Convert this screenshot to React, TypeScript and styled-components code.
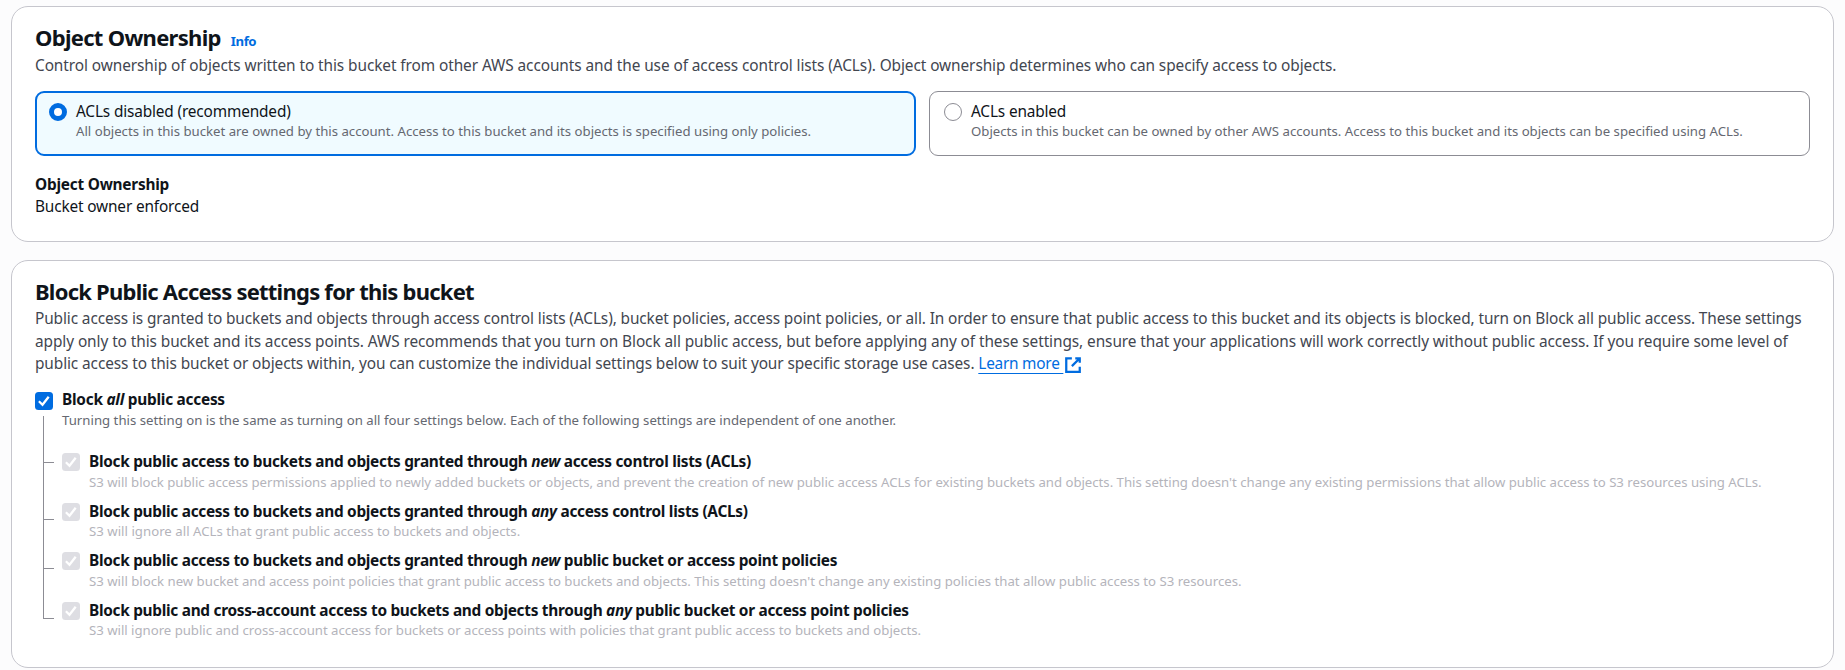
import React from 'react';
import styled, { createGlobalStyle, css } from 'styled-components';

const color = {
  page: '#fcfcfd',
  card: '#ffffff',
  divider: '#c6c6cd',
  heading: '#0f141a',
  body: '#424650',
  label: '#0f141a',
  hint: '#656871',
  disabled: '#b4b4bb',
  disabledFill: '#dedee3',
  control: '#8c8c94',
  accent: '#006ce0',
  selected: '#f0fbff',
};

const GlobalStyle = createGlobalStyle`
  *, *::before, *::after { box-sizing: border-box; }
  body {
    margin: 0;
    background: ${color.page};
    color: ${color.label};
    font-family: 'Noto Sans', 'Open Sans', sans-serif;
    font-size: 15.4px;
    line-height: 22px;
    letter-spacing: -0.1px;
  }
`;

const Page = styled.main`
  display: flex;
  flex-direction: column;
  gap: 18px;
  width: 100%;
  padding: 6px 11px 2px;
`;

const Card = styled.section<{ $height: number }>`
  height: ${(p) => p.$height}px;
  padding: 17px 23px 0;
  border: 1px solid ${color.divider};
  border-radius: 17px;
  background: ${color.card};
`;

const CardHeading = styled.div`
  display: flex;
  align-items: baseline;
  gap: 10px;
  height: 26px;
`;

const Title = styled.h2<{ $tracking: number }>`
  margin: 0;
  color: ${color.heading};
  font-size: 22px;
  font-weight: 700;
  line-height: 26px;
  letter-spacing: ${(p) => p.$tracking}px;
  white-space: nowrap;
`;

const InfoLink = styled.a`
  color: ${color.accent};
  font-size: 13.2px;
  font-weight: 700;
  letter-spacing: -0.4px;
`;

const Summary = styled.p`
  margin: 5px 0 0;
  color: ${color.body};
  letter-spacing: -0.082px;
`;

const Intro = styled.p`
  margin: 4.4px 0 0;
  color: ${color.body};
  line-height: 22.4px;
`;

const IntroLine = styled.span<{ $tracking: number }>`
  display: block;
  letter-spacing: ${(p) => p.$tracking}px;
  white-space: nowrap;
`;

const ExternalLink = styled.a`
  color: ${color.accent};
  letter-spacing: -0.24px;
  white-space: pre;
  text-decoration: underline;
  text-decoration-thickness: 1px;
  text-underline-offset: 4px;
`;

const ExternalIcon = styled.svg`
  width: 18px;
  height: 18px;
  margin-left: 1px;
  vertical-align: -5px;
  fill: none;
  stroke: ${color.accent};
  stroke-width: 2;
`;

const Tiles = styled.div`
  display: grid;
  grid-template-columns: 1fr 1fr;
  gap: 13px;
  margin-top: 14px;
`;

const Tile = styled.label<{ $selected?: boolean }>`
  display: flex;
  gap: 9px;
  height: 65px;
  border-radius: 9px;
  ${(p) =>
    p.$selected
      ? css`
          padding: 7px 12px;
          border: 2px solid ${color.accent};
          background: ${color.selected};
        `
      : css`
          padding: 8px 14px;
          border: 1px solid ${color.control};
          background: ${color.card};
        `}
`;

const Radio = styled.span<{ $selected?: boolean }>`
  flex: none;
  width: 18px;
  height: 18px;
  margin-top: 3px;
  border: ${(p) => (p.$selected ? `5px solid ${color.accent}` : `1px solid ${color.control}`)};
  border-radius: 50%;
  background: ${color.card};
`;

const TextStack = styled.div`
  display: flex;
  flex-direction: column;
`;

const Label = styled.span<{ $tracking?: number }>`
  height: 22px;
  line-height: 24px;
  letter-spacing: ${(p) => p.$tracking ?? -0.16}px;
  white-space: nowrap;
`;

const StrongLabel = styled(Label)`
  font-weight: 700;
`;

const Hint = styled.span<{ $disabled?: boolean; $gap?: number; $tracking?: number }>`
  margin-top: ${(p) => p.$gap ?? 0}px;
  color: ${(p) => (p.$disabled ? color.disabled : color.hint)};
  font-size: 13.2px;
  line-height: 18px;
  letter-spacing: ${(p) => p.$tracking ?? 0}px;
  white-space: nowrap;
`;

const Field = styled(TextStack)`
  margin-top: 17px;
`;

const Tree = styled.div`
  display: flex;
  gap: 9px;
  margin-top: 12.4px;
`;

const TreeRail = styled.div`
  display: flex;
  flex-direction: column;
  width: 18px;
`;

const Branches = styled.div`
  display: flex;
  flex-direction: column;
  width: 11px;
  margin: 6px 0 0 8px;
  border-left: 1px solid ${color.control};
`;

const Branch = styled.div<{ $height: number }>`
  height: ${(p) => p.$height}px;
  border-bottom: 1px solid ${color.control};
`;

const CheckRow = styled.div`
  display: flex;
  gap: 9px;
`;

const CheckList = styled.div`
  display: flex;
  flex-direction: column;
  gap: 9.1px;
  margin-top: 21.2px;
`;

const Box = styled.svg<{ $disabled?: boolean }>`
  flex: none;
  width: 18px;
  height: 18px;
  margin-top: ${(p) => (p.$disabled ? 3 : 4)}px;
  border-radius: 3.5px;
  background: ${(p) => (p.$disabled ? color.disabledFill : color.accent)};
  fill: none;
  stroke: #fff;
  stroke-width: 2.3;
`;

function Checkbox({ disabled }: { disabled?: boolean }) {
  return (
    <Box viewBox="0 0 18 18" $disabled={disabled}>
      <path d="M3.9 9.2 7.5 12.7 13.7 4.7" />
    </Box>
  );
}

const settings = [
  {
    before: 'Block public access to buckets and objects granted through ',
    emphasis: 'new',
    after: ' access control lists (ACLs)',
    hint: "S3 will block public access permissions applied to newly added buckets or objects, and prevent the creation of new public access ACLs for existing buckets and objects. This setting doesn't change any existing permissions that allow public access to S3 resources using ACLs.",
    tracking: -0.017,
  },
  {
    before: 'Block public access to buckets and objects granted through ',
    emphasis: 'any',
    after: ' access control lists (ACLs)',
    hint: 'S3 will ignore all ACLs that grant public access to buckets and objects.',
    tracking: 0.025,
  },
  {
    before: 'Block public access to buckets and objects granted through ',
    emphasis: 'new',
    after: ' public bucket or access point policies',
    hint: "S3 will block new bucket and access point policies that grant public access to buckets and objects. This setting doesn't change any existing policies that allow public access to S3 resources.",
    tracking: 0,
  },
  {
    before: 'Block public and cross-account access to buckets and objects through ',
    emphasis: 'any',
    after: ' public bucket or access point policies',
    hint: 'S3 will ignore public and cross-account access for buckets or access points with policies that grant public access to buckets and objects.',
    tracking: -0.018,
  },
];

const branchHeights = [47, 57, 49, 50];

export default function App() {
  return (
    <>
      <GlobalStyle />
      <Page>
        <Card $height={236}>
          <CardHeading>
            <Title $tracking={-0.7}>Object Ownership</Title>
            <InfoLink>Info</InfoLink>
          </CardHeading>
          <Summary>
            Control ownership of objects written to this bucket from other AWS accounts and the use of access control
            lists (ACLs). Object ownership determines who can specify access to objects.
          </Summary>
          <Tiles>
            <Tile $selected>
              <Radio $selected />
              <TextStack>
                <Label>ACLs disabled (recommended)</Label>
                <Hint>
                  All objects in this bucket are owned by this account. Access to this bucket and its objects is
                  specified using only policies.
                </Hint>
              </TextStack>
            </Tile>
            <Tile>
              <Radio />
              <TextStack>
                <Label>ACLs enabled</Label>
                <Hint $tracking={-0.008}>
                  Objects in this bucket can be owned by other AWS accounts. Access to this bucket and its objects can
                  be specified using ACLs.
                </Hint>
              </TextStack>
            </Tile>
          </Tiles>
          <Field>
            <StrongLabel $tracking={-0.23}>Object Ownership</StrongLabel>
            <Label>Bucket owner enforced</Label>
          </Field>
        </Card>

        <Card $height={408}>
          <CardHeading>
            <Title $tracking={-0.76}>Block Public Access settings for this bucket</Title>
          </CardHeading>
          <Intro>
            <IntroLine $tracking={-0.108}>
              Public access is granted to buckets and objects through access control lists (ACLs), bucket policies,
              access point policies, or all. In order to ensure that public access to this bucket and its objects is
              blocked, turn on Block all public access. These settings
            </IntroLine>
            <IntroLine $tracking={-0.082}>
              apply only to this bucket and its access points. AWS recommends that you turn on Block all public access,
              but before applying any of these settings, ensure that your applications will work correctly without
              public access. If you require some level of
            </IntroLine>
            <IntroLine $tracking={-0.102}>
              public access to this bucket or objects within, you can customize the individual settings below to suit
              your specific storage use cases. <ExternalLink>Learn more </ExternalLink>
              <ExternalIcon viewBox="0 0 16 16">
                <path d="M10 2h4v4M7 9l7-7M14 9.5V14H2V2h5" />
              </ExternalIcon>
            </IntroLine>
          </Intro>
          <Tree>
            <TreeRail>
              <Checkbox />
              <Branches>
                {branchHeights.map((height, i) => (
                  <Branch key={i} $height={height} />
                ))}
              </Branches>
            </TreeRail>
            <TextStack>
              <StrongLabel $tracking={-0.25}>
                Block <em>all</em> public access
              </StrongLabel>
              <Hint $gap={1} $tracking={0.013}>
                Turning this setting on is the same as turning on all four settings below. Each of the following
                settings are independent of one another.
              </Hint>
              <CheckList>
                {settings.map((item) => (
                  <CheckRow key={item.hint}>
                    <Checkbox disabled />
                    <TextStack>
                      <StrongLabel $tracking={-0.293}>
                        {item.before}
                        <em>{item.emphasis}</em>
                        {item.after}
                      </StrongLabel>
                      <Hint $disabled $gap={0.4} $tracking={item.tracking}>
                        {item.hint}
                      </Hint>
                    </TextStack>
                  </CheckRow>
                ))}
              </CheckList>
            </TextStack>
          </Tree>
        </Card>
      </Page>
    </>
  );
}
